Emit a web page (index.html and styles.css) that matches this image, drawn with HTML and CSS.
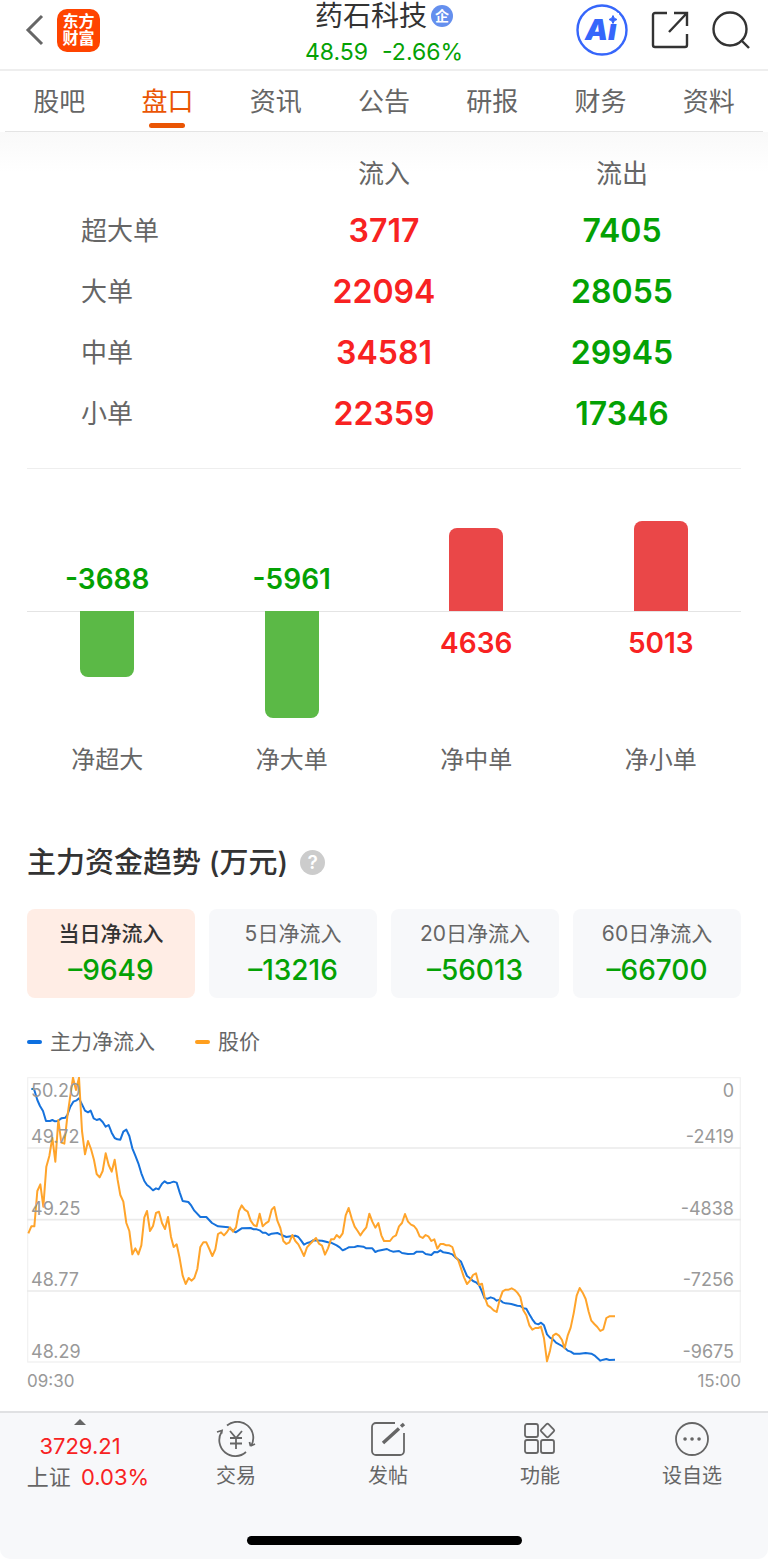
FILE: index.html
```html
<!DOCTYPE html>
<html lang="zh-CN">
<head>
    <meta charset="UTF-8">
    <meta name="viewport" content="width=device-width, initial-scale=1.0">
    <title>药石科技 - 盘口</title>
    <link rel="stylesheet" href="styles.css">
</head>
<body>
    <header class="header">
        <div class="header-left">
            <button class="icon-button" aria-label="返回">
                <svg width="20" height="32" viewBox="0 0 20 32"><path d="M17 2 3 16l14 14" fill="none" stroke="#666" stroke-width="3"/></svg>
            </button>
            <a class="logo" href="#"><span>东方</span><span>财富</span></a>
        </div>
        <div class="stock">
            <h1 class="stock-name">药石科技<span class="badge">企</span></h1>
            <p class="stock-price"><span>48.59</span><span>-2.66%</span></p>
        </div>
        <div class="header-right">
            <button class="icon-button" aria-label="智能助手">
                <svg width="52" height="52" viewBox="0 0 52 52">
                    <circle cx="26" cy="26" r="24.5" fill="#fff" stroke="#3666fb" stroke-width="2.4"/>
                    <text class="ai-text" x="9" y="36">Ai</text>
                    <path d="M32 9h11v10.500H32z" fill="#fff"/>
                    <path d="m37 11.500 1.300 2.700 2.700 1.300-2.700 1.300-1.300 2.700-1.300-2.700-2.700-1.300 2.700-1.300z" fill="#3666fb" stroke="#3666fb" stroke-linejoin="round"/>
                </svg>
            </button>
            <button class="icon-button" aria-label="分享">
                <svg width="38" height="38" viewBox="0 0 38 38" fill="none" stroke="#333" stroke-width="2.4">
                    <path d="M16 2H4a2 2 0 0 0-2 2v30a2 2 0 0 0 2 2h30a2 2 0 0 0 2-2V23M23 2h13v13M36 2 18 21"/>
                </svg>
            </button>
            <button class="icon-button" aria-label="搜索">
                <svg width="38" height="38" viewBox="0 0 38 38" fill="none" stroke="#333" stroke-width="2.4">
                    <circle cx="18" cy="18" r="16.5"/><path d="m29 29 8 8"/>
                </svg>
            </button>
        </div>
    </header>

    <nav class="tabs">
        <a class="tab" href="#">股吧</a>
        <a class="tab active" href="#">盘口</a>
        <a class="tab" href="#">资讯</a>
        <a class="tab" href="#">公告</a>
        <a class="tab" href="#">研报</a>
        <a class="tab" href="#">财务</a>
        <a class="tab" href="#">资料</a>
    </nav>

    <main>
        <section class="flow">
            <table class="flow-table">
                <thead>
                    <tr><td></td><th scope="col">流入</th><th scope="col">流出</th></tr>
                </thead>
                <tbody>
                    <tr><th scope="row">超大单</th><td class="up">3717</td><td class="down">7405</td></tr>
                    <tr><th scope="row">大单</th><td class="up">22094</td><td class="down">28055</td></tr>
                    <tr><th scope="row">中单</th><td class="up">34581</td><td class="down">29945</td></tr>
                    <tr><th scope="row">小单</th><td class="up">22359</td><td class="down">17346</td></tr>
                </tbody>
            </table>
        </section>

        <section class="net">
            <div class="net-row net-upper">
                <span class="net-value down">-3688</span>
                <span class="net-value down">-5961</span>
                <span class="bar bar-up" style="height: 83px"></span>
                <span class="bar bar-up" style="height: 90px"></span>
            </div>
            <hr class="net-axis">
            <div class="net-row net-lower">
                <span class="bar bar-down" style="height: 66px"></span>
                <span class="bar bar-down" style="height: 107px"></span>
                <span class="net-value up">4636</span>
                <span class="net-value up">5013</span>
            </div>
            <div class="net-row net-labels">
                <span>净超大</span>
                <span>净大单</span>
                <span>净中单</span>
                <span>净小单</span>
            </div>
        </section>

        <section class="trend">
            <h2 class="trend-title">主力资金趋势 (万元)<button class="help" aria-label="说明">?</button></h2>

            <div class="periods">
                <button class="period active"><span class="period-name">当日净流入</span><span class="period-value">–9649</span></button>
                <button class="period"><span class="period-name">5日净流入</span><span class="period-value">–13216</span></button>
                <button class="period"><span class="period-name">20日净流入</span><span class="period-value">–56013</span></button>
                <button class="period"><span class="period-name">60日净流入</span><span class="period-value">–66700</span></button>
            </div>

            <div class="legend">
                <span class="legend-item legend-main">主力净流入</span>
                <span class="legend-item legend-price">股价</span>
            </div>

            <div class="chart">
                <svg class="chart-lines" viewBox="0 0 2142 858">
                    <path class="grid-edge" d="M2 2H2140V855H2z"/>
                    <path class="grid-line" d="M0 213H2142M0 428H2142M0 642H2142"/>
                    <!-- main net inflow -->
                    <polyline class="line-main" points="13,36 21,36 31,69 39,87 48,102 57,132 69,132 76,129 84,133 92,132 103,124 115,122 121,114 130,89 139,74 149,70 156,64 165,82 174,101 183,106 191,101 200,124 209,129 218,126 227,135 236,149 245,144 254,167 263,183 271,187 280,188 289,164 298,158 307,177 316,214 325,236 334,259 343,289 352,312 360,324 369,331 378,340 387,334 395,337 405,320 413,313 422,319 431,317 440,314 449,317 458,346 467,372 484,375 493,386 502,401 520,420 538,420 555,438 573,448 604,451 617,460 626,466 635,460 644,454 671,453 680,457 689,457 698,460 707,467 716,467 725,474 734,470 751,468 760,472 778,480 796,477 805,476 814,480 822,490 831,503 840,498 849,496 858,490 885,491 903,496 912,497 929,505 938,511 947,520 956,516 965,511 983,510 992,507 1009,509 1018,514 1036,514 1045,525 1054,521 1080,516 1089,521 1098,524 1116,522 1125,528 1143,531 1161,530 1169,524 1187,524 1196,531 1213,534 1222,525 1231,526 1240,520 1249,526 1267,529 1276,532 1285,541 1302,554 1311,576 1320,597 1329,604 1338,612 1347,616 1356,624 1365,644 1373,664 1382,665 1391,661 1400,664 1409,671 1418,668 1427,676 1436,679 1453,681 1471,686 1480,687 1489,694 1498,695 1507,712 1516,727 1525,739 1534,742 1542,737 1551,745 1560,772 1569,782 1578,787 1587,797 1605,807 1613,812 1622,821 1631,824 1640,830 1658,830 1676,828 1693,830 1702,835 1711,843 1720,851 1729,848 1738,846 1747,849 1764,848"/>
                    <!-- share price -->
                    <polyline class="line-price" points="4,469 13,448 22,448 31,342 40,322 49,389 58,269 67,237 76,182 85,254 94,129 103,197 112,200 121,119 130,56 138,2 147,39 156,2 165,162 174,232 183,192 192,216 201,249 209,291 218,301 227,282 236,229 245,264 254,284 263,248 272,309 280,354 289,374 298,438 307,462 316,532 325,514 334,532 343,505 352,421 360,402 369,462 378,447 387,408 396,404 405,438 414,456 423,420 432,480 440,510 449,502 458,544 467,596 476,621 485,603 494,611 502,603 511,576 520,510 529,496 538,496 547,516 556,537 565,517 573,471 582,466 591,475 600,465 609,451 618,464 627,451 636,402 644,385 653,398 662,404 671,431 680,444 689,448 698,410 707,448 716,439 725,433 734,398 742,390 751,431 760,453 769,492 778,501 787,496 796,474 805,492 814,502 823,520 831,537 840,511 849,501 858,492 867,483 876,500 885,506 894,533 903,514 912,487 921,487 929,474 938,482 947,469 956,415 965,393 974,424 983,449 992,462 1000,475 1009,462 1018,451 1027,410 1036,434 1045,452 1054,438 1063,475 1071,492 1089,492 1098,480 1107,475 1116,448 1125,438 1134,411 1143,434 1152,443 1161,447 1169,457 1178,478 1187,483 1196,474 1205,479 1213,492 1222,487 1231,515 1240,501 1249,501 1258,505 1267,505 1276,510 1285,539 1294,550 1311,601 1320,621 1329,611 1338,594 1347,589 1356,624 1365,620 1373,660 1382,685 1391,691 1400,700 1409,705 1418,668 1427,643 1436,638 1445,638 1454,634 1463,639 1471,647 1480,660 1489,700 1498,715 1507,745 1516,758 1525,753 1534,753 1542,749 1551,784 1560,853 1569,821 1578,776 1587,770 1596,776 1605,789 1613,814 1622,776 1631,752 1640,709 1649,656 1658,633 1667,647 1676,666 1685,704 1693,731 1702,741 1711,750 1720,762 1729,757 1738,723 1747,718 1764,718"/>
                </svg>
                <div class="scale">
                    <div class="scale-row"><span>50.20</span><span>0</span></div>
                    <div class="scale-row"><span>49.72</span><span>-2419</span></div>
                    <div class="scale-row"><span>49.25</span><span>-4838</span></div>
                    <div class="scale-row"><span>48.77</span><span>-7256</span></div>
                    <div class="scale-row"><span>48.29</span><span>-9675</span></div>
                </div>
            </div>
            <div class="times"><span>09:30</span><span>15:00</span></div>
        </section>
    </main>

    <footer class="footer">
        <div class="toolbar">
            <button class="index">
                <svg width="12" height="6" viewBox="0 0 12 6"><path d="M6 0l6 6H0z" fill="#666"/></svg>
                <span class="index-value">3729.21</span>
                <span class="index-change">上证 <em>0.03%</em></span>
            </button>
            <button class="tool">
                <svg width="40" height="36" viewBox="0 0 40 36">
                    <path d="M11 4.5A16 16 0 0 1 35 25M1 11l5-1.500-.5 3M5.500 11A16 16 0 0 0 30 31M34.500 25l4.500-2M34.500 25l-1-4"/>
                    <path d="m14 10 6 7 6-7M14 17h12M14 22.500h12M20 17v11"/>
                </svg>
                交易
            </button>
            <button class="tool">
                <svg width="36" height="36" viewBox="0 0 36 36">
                    <path d="M25 2H6a4 4 0 0 0-4 4v24a4 4 0 0 0 4 4h24a4 4 0 0 0 4-4V12"/>
                    <path d="M13 22 29 7.500M31 5.500 34 3" stroke-width="3.5"/>
                </svg>
                发帖
            </button>
            <button class="tool">
                <svg width="36" height="36" viewBox="0 0 36 36">
                    <rect x="3" y="3" width="13" height="13" rx="2"/>
                    <rect x="3" y="19" width="13" height="13" rx="2"/>
                    <rect x="19" y="19" width="13" height="13" rx="2"/>
                    <path d="m24.500 3.200-5.300 5.300a1.500 1.500 0 0 0 0 2l5.300 5.300a1.500 1.500 0 0 0 2 0l5.300-5.300a1.500 1.500 0 0 0 0-2l-5.300-5.300a1.500 1.500 0 0 0-2 0z"/>
                </svg>
                功能
            </button>
            <button class="tool">
                <svg width="36" height="36" viewBox="0 0 36 36">
                    <circle cx="18" cy="18" r="16"/>
                    <path d="M11 18h.1M18 18h.1M25 18h.1" stroke-width="3.5" stroke-linecap="round"/>
                </svg>
                设自选
            </button>
        </div>
        <div class="home-bar"></div>
    </footer>
</body>
</html>
```
FILE: styles.css
```css
* {
    box-sizing: border-box;
}

body {
    margin: 0;
    background-color: #fff;
    font-family: Inter, 'Noto Sans CJK SC', sans-serif;
    color: #666;
}

button {
    padding: 0;
    border: none;
    background: none;
    font: inherit;
    color: inherit;
    cursor: pointer;
}

a {
    color: inherit;
    text-decoration: none;
}

svg {
    display: block;
}

.up {
    color: #f82222;
}

.down {
    color: #04a104;
}

/* Header */
.header {
    display: grid;
    grid-template-columns: 1fr auto 1fr;
    height: 71px;
    padding: 0 18px;
    border-bottom: 2px solid #eee;
}

.header-left,
.header-right {
    display: flex;
    align-items: center;
    height: 60px;
}

.header-left {
    gap: 12px;
    padding-left: 7px;
}

.header-right {
    justify-content: flex-end;
    gap: 23px;
}

.logo {
    display: flex;
    flex-direction: column;
    justify-content: center;
    align-items: center;
    width: 43px;
    height: 43px;
    border-radius: 10px;
    background-color: #ff4400;
    color: #fff;
    font-size: 16px;
    font-weight: 700;
    line-height: 17px;
}

.ai-text {
    fill: #3666fb;
    font-family: Inter, sans-serif;
    font-size: 29px;
    font-style: italic;
    font-weight: 900;
}

.stock {
    text-align: center;
}

.stock-name {
    display: flex;
    justify-content: center;
    align-items: center;
    gap: 4px;
    margin: 0;
    font-size: 28px;
    font-weight: 400;
    line-height: 32px;
    color: #333;
}

.badge {
    width: 22px;
    height: 22px;
    border-radius: 50%;
    background-color: #648fee;
    color: #fff;
    font-size: 14px;
    font-weight: 700;
    line-height: 21px;
}

.stock-price {
    display: flex;
    justify-content: center;
    gap: 14px;
    margin: 4px 0 0;
    font-size: 23px;
    line-height: 32px;
    color: #04a104;
}

/* Tabs */
.tabs {
    display: grid;
    grid-template-columns: repeat(7, 1fr);
    margin: 0 5px;
    border-bottom: 1px solid #e4e4e4;
}

.tab {
    display: flex;
    flex-direction: column;
    align-items: center;
    height: 60px;
    padding-top: 13px;
    font-size: 26px;
    line-height: 36px;
}

.tab.active {
    color: #ea5504;
}

.tab.active::after {
    content: '';
    width: 36px;
    height: 5px;
    margin-top: 3px;
    border-radius: 3px;
    background-color: #ea5504;
}

/* Money flow table */
.flow {
    padding: 14px 27px 0;
    background: linear-gradient(#f9f9f9, #fff 40px);
}

.flow-table {
    width: 100%;
    table-layout: fixed;
    border-collapse: collapse;
    border-bottom: 1px solid #eee;
    text-align: center;
}

.flow-table th,
.flow-table td {
    height: 61px;
    padding: 0;
}

.flow-table thead th,
.flow-table thead td {
    height: 54px;
}

.flow-table th {
    padding-bottom: 4px;
    font-size: 26px;
    font-weight: 400;
}

.flow-table tbody th {
    padding-left: 54px;
    text-align: left;
}

.flow-table td {
    font-size: 32px;
    font-weight: 600;
}

.flow-table tbody tr:last-child th,
.flow-table tbody tr:last-child td {
    height: 85px;
    padding-bottom: 24px;
}

.flow-table tbody tr:last-child th {
    padding-bottom: 28px;
}

/* Net bars */
.net-row {
    display: grid;
    grid-template-columns: repeat(4, 1fr);
    justify-items: center;
    padding: 0 15px;
}

.net-upper {
    align-items: end;
    height: 142px;
}

.net-lower {
    align-items: start;
    height: 131px;
}

.net-axis {
    height: 1px;
    margin: 0 27px -1px;
    border: none;
    background-color: #e4e4e4;
}

.net-value {
    margin: 14px 0;
    font-size: 28px;
    font-weight: 600;
    line-height: 36px;
}

.bar {
    width: 54px;
}

.bar-up {
    border-radius: 8px 8px 0 0;
    background-color: #ea4748;
}

.bar-down {
    border-radius: 0 0 8px 8px;
    background-color: #5bb946;
}

.net-labels {
    font-size: 24px;
    line-height: 36px;
}

/* Trend */
.trend {
    padding: 65px 27px 0;
}

.trend-title {
    display: flex;
    align-items: center;
    gap: 12px;
    margin: 0;
    font-size: 29px;
    font-weight: 500;
    line-height: 40px;
    color: #333;
}

.help {
    width: 25px;
    height: 25px;
    border-radius: 50%;
    background-color: #ccc;
    color: #fff;
    font-size: 19px;
    font-weight: 600;
    line-height: 25px;
}

.periods {
    display: grid;
    grid-template-columns: repeat(4, 1fr);
    gap: 14px;
    margin-top: 26px;
}

.period {
    display: flex;
    flex-direction: column;
    align-items: center;
    height: 89px;
    padding-top: 9px;
    border-radius: 8px;
    background-color: #f7f8fa;
}

.period.active {
    background-color: #ffede5;
}

.period-name {
    font-size: 21px;
    line-height: 32px;
}

.period.active .period-name {
    font-weight: 500;
    color: #333;
}

.period-value {
    margin-top: 2px;
    font-size: 28px;
    font-weight: 500;
    line-height: 36px;
    color: #04a104;
}

.legend {
    display: flex;
    gap: 40px;
    margin-top: 28px;
    font-size: 21px;
    line-height: 32px;
}

.legend-item {
    display: flex;
    align-items: center;
    gap: 8px;
}

.legend-item::before {
    content: '';
    width: 15px;
    height: 4px;
    border-radius: 2px;
    background-color: #ff9f1e;
}

.legend-main::before {
    background-color: #0d6fe0;
}

.chart {
    position: relative;
    margin-top: 19px;
}

.chart-lines {
    width: 100%;
    height: auto;
    fill: none;
    stroke-linejoin: round;
}

.grid-edge {
    stroke: #f2f2f2;
    stroke-width: 4;
}

.grid-line {
    stroke: #eaeaea;
    stroke-width: 5;
}

.line-main {
    stroke: #1672dc;
    stroke-width: 6;
}

.line-price {
    stroke: #ffa42b;
    stroke-width: 6;
}

/* Axis labels lie over the lines */
.scale {
    position: absolute;
    inset: 0;
    display: grid;
    grid-template-rows: 25fr 46fr 71fr 71fr 71fr;
    padding: 0 7px 0 4px;
}

.scale-row {
    display: flex;
    justify-content: space-between;
    align-items: flex-end;
    font-size: 18px;
    line-height: 22px;
    color: #999;
}

.times {
    display: flex;
    justify-content: space-between;
    margin-top: 7px;
    font-size: 17px;
    line-height: 22px;
    color: #999;
}

/* Bottom toolbar */
.footer {
    margin-top: 19px;
    padding-bottom: 14px;
    border-top: 2px solid #e0e1e3;
    border-radius: 0 0 10px 10px;
    background-color: #f7f8fa;
}

.toolbar {
    display: grid;
    grid-template-columns: 160fr repeat(4, 152fr);
    height: 123px;
}

.index,
.tool {
    display: flex;
    flex-direction: column;
    align-items: center;
    padding-top: 8px;
}

.tool {
    font-size: 20px;
    line-height: 38px;
}

.tool svg {
    fill: none;
    stroke: #666;
    stroke-width: 1.8;
}

.index {
    padding-top: 6px;
    font-size: 22px;
    line-height: 31px;
}

.index-value {
    margin-top: 6px;
    color: #f82222;
}

.index-change {
    margin-left: 16px;
}

.index-change em {
    margin-left: 4px;
    font-style: normal;
    color: #f82222;
}

.home-bar {
    width: 275px;
    height: 9px;
    margin: 0 auto;
    border-radius: 5px;
    background-color: #000;
}
```
